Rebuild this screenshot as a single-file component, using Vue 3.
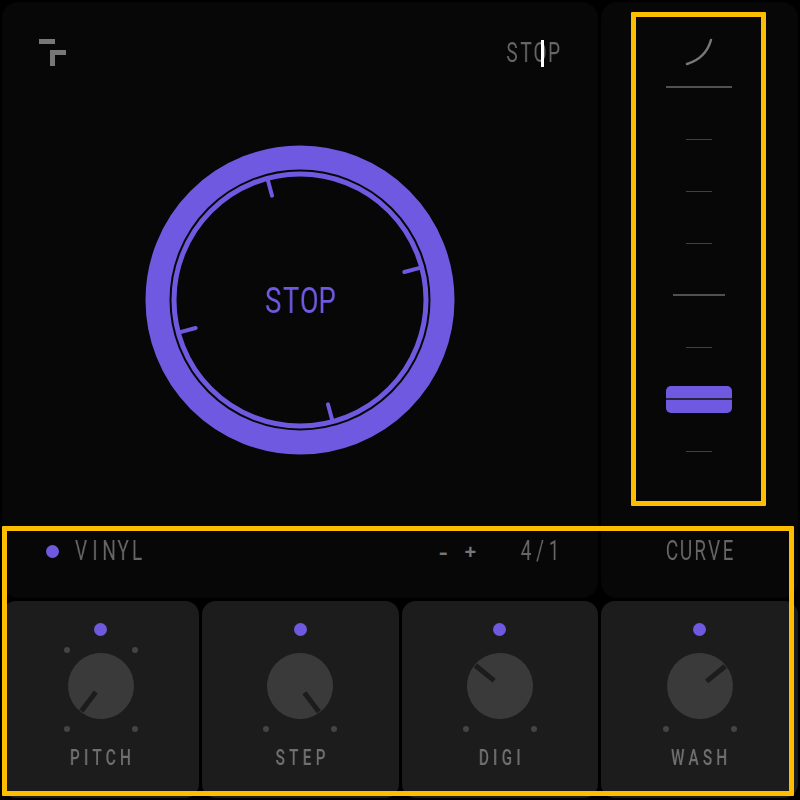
<script setup>
const ticks = [
  { kind: 'long' }, { kind: 'short' }, { kind: 'short' }, { kind: 'short' },
  { kind: 'mid' }, { kind: 'short' }, { kind: 'handle' }, { kind: 'short' }
]
const dialTicks = [-15, 75, 165, 255]
const knobs = [
  { name: 'PITCH', angle: 217, top: true },
  { name: 'STEP', angle: 143, top: false },
  { name: 'DIGI', angle: -51, top: false },
  { name: 'WASH', angle: 51, top: false }
]
const chars = (s) => s.split('')
</script>

<template>
  <div class="device">
    <section class="panel main">
      <header class="head">
        <svg class="logo" width="27" height="27" viewBox="0 0 27 27">
          <path d="M0 0H16V5H0ZM11 11H27V16H16V27H11Z" fill="#777" />
        </svg>
        <div class="lcd status">
          <span v-for="(c, i) in chars('STOP')" :key="i" class="ch">{{ c }}</span>
          <span class="caret"></span>
        </div>
      </header>
      <div class="dial-wrap">
        <svg class="dial" width="310" height="310" viewBox="-155 -155 310 310">
          <circle r="142.5" fill="none" stroke="#6f59e0" stroke-width="24" />
          <circle r="126" fill="none" stroke="#6f59e0" stroke-width="5" />
          <line
            v-for="a in dialTicks"
            :key="a"
            x1="0" y1="-124" x2="0" y2="-108"
            stroke="#6f59e0" stroke-width="4" stroke-linecap="round"
            :transform="`rotate(${a})`"
          />
        </svg>
        <div class="lcd lg">
          <span v-for="(c, i) in chars('STOP')" :key="i" class="ch">{{ c }}</span>
        </div>
      </div>
      <footer class="foot">
        <span class="led"></span>
        <span class="lcd vinyl">
          <span v-for="(c, i) in chars('VINYL')" :key="i" class="ch">{{ c }}</span>
        </span>
        <span class="pm minus">-</span>
        <span class="pm plus">+</span>
        <span class="lcd ratio">
          <span v-for="(c, i) in chars('4/1')" :key="i" class="ch">{{ c }}</span>
        </span>
      </footer>
    </section>

    <section class="panel side">
      <svg class="curve" width="28" height="28" viewBox="0 0 28 28">
        <path d="M2 26C12 23 22 16 26 2" fill="none" stroke="#777" stroke-width="2.5" stroke-linecap="round" />
      </svg>
      <div class="ticks">
        <div v-for="(t, i) in ticks" :key="i" class="tick-row">
          <div v-if="t.kind === 'handle'" class="handle"></div>
          <div v-else :class="['tick', t.kind]"></div>
        </div>
      </div>
      <div class="lcd curve-label">
        <span v-for="(c, i) in chars('CURVE')" :key="i" class="ch">{{ c }}</span>
      </div>
    </section>

    <section v-for="k in knobs" :key="k.name" class="card">
      <span class="led"></span>
      <div class="knob-area">
        <span v-if="k.top" class="pip tl"></span>
        <span v-if="k.top" class="pip tr"></span>
        <span class="pip bl"></span>
        <span class="pip br"></span>
        <div class="knob" :style="{ transform: `rotate(${k.angle}deg)` }"><i class="pointer"></i></div>
      </div>
      <div class="name">{{ k.name }}</div>
    </section>

    <div class="frame frame-a"></div>
    <div class="frame frame-b"></div>
  </div>
</template>

<style>
html, body { margin: 0; background: #000; }
</style>

<style scoped>
.device {
  position: relative;
  width: 800px;
  height: 800px;
  box-sizing: border-box;
  padding: 2px;
  background: #000;
  display: grid;
  grid-template-columns: repeat(4, 1fr);
  grid-template-rows: repeat(4, 1fr);
  gap: 3px;
  overflow: hidden;
}
.panel {
  background: #070707;
  border-radius: 16px;
  grid-row: span 3;
  position: relative;
  display: flex;
  flex-direction: column;
}
.main { grid-column: span 3; padding: 37px 37px 0; box-sizing: border-box; }
.head { display: flex; justify-content: space-between; align-items: flex-start; }
.logo { display: block; }
.lcd {
  font-family: "Roboto", "Liberation Sans", sans-serif;
  font-weight: 400;
  font-size: 27px;
  line-height: 27px;
  color: #666;
  white-space: nowrap;
  display: flex;
  flex: none;
}
.ch {
  flex: none;
  width: 14px;
  display: flex;
  justify-content: center;
  transform: scaleX(0.7);
  will-change: transform;
}
.lg { font-size: 37px; line-height: 37px; color: #6f59e0; }
.lg .ch { width: 18.25px; transform: scaleX(0.74); }
.status { position: relative; margin-top: 1px; }
.caret {
  position: absolute;
  left: 36px;
  top: 0;
  width: 2.5px;
  height: 27px;
  background: #fff;
}
.dial-wrap {
  flex: none;
  height: 310px;
  margin-top: 78px;
  display: grid;
  place-items: center;
}
.dial-wrap > * { grid-area: 1 / 1; }
.dial { display: block; }
.foot {
  margin-top: 83px;
  margin-left: 7px;
  display: flex;
  align-items: center;
}
.led {
  display: block;
  width: 13px;
  height: 13px;
  border-radius: 50%;
  background: #6f59e0;
  flex: none;
}
.vinyl { margin-left: 15px; }
.pm {
  font-family: "Liberation Sans", sans-serif;
  font-weight: 700;
  font-size: 20px;
  line-height: 20px;
  color: #777;
}
.minus { margin-left: auto; transform: scaleX(1.35); }
.plus { margin-left: 18px; }
.ratio { margin-left: 43px; }
.side { align-items: center; padding-top: 36px; box-sizing: border-box; }
.curve { display: block; margin-right: 2px; }
.ticks {
  margin-top: 20px;
  display: flex;
  flex-direction: column;
  gap: 50px;
  width: 100%;
}
.tick-row {
  height: 2px;
  padding-right: 1px;
  display: flex;
  align-items: center;
  justify-content: center;
}
.tick { flex: none; background: #404040; height: 1px; width: 26px; }
.tick.long { width: 66px; height: 2px; background: #505050; }
.tick.mid { width: 52px; height: 2px; background: #505050; }
.handle {
  flex: none;
  width: 66px;
  height: 27px;
  box-sizing: border-box;
  border-radius: 5px;
  background: linear-gradient(#6f59e0 0 12px, #2a2440 12px 14px, #6f59e0 14px);
}
.curve-label { margin-top: 86px; }
.card {
  background: #1c1c1c;
  border-radius: 14px;
  display: flex;
  flex-direction: column;
  align-items: center;
  padding-top: 22px;
  box-sizing: border-box;
}
.card:nth-of-type(3) { padding-left: 1px; }
.knob-area {
  position: relative;
  width: 74px;
  height: 85px;
  margin-top: 11px;
  display: grid;
  place-items: center;
}
.knob {
  width: 66px;
  height: 66px;
  margin-top: -7px;
  border-radius: 50%;
  background: #3a3a3a;
  position: relative;
}
.pointer {
  position: absolute;
  left: 30.5px;
  top: 1px;
  width: 5px;
  height: 24px;
  background: #1c1c1c;
}
.pip { position: absolute; width: 6px; height: 6px; border-radius: 50%; background: #444; }
.tl { left: 0; top: 0; }
.tr { right: 0; top: 0; }
.bl { left: 0; bottom: 0; }
.br { right: 0; bottom: 0; }
.name {
  margin-top: 14px;
  font-family: "Roboto", "Liberation Sans", sans-serif;
  font-weight: 500;
  font-size: 22px;
  line-height: 24px;
  letter-spacing: 6px;
  margin-right: -4px;
  color: #707070;
  transform: scaleX(0.7);
  will-change: transform;
}
.frame {
  position: absolute;
  box-sizing: border-box;
  border: 5px solid #fdbe00;
  border-radius: 1px;
  pointer-events: none;
}
.frame-a { left: 631px; top: 12px; width: 135px; height: 494px; }
.frame-b { left: 2px; top: 526px; width: 792px; height: 270px; }
</style>
